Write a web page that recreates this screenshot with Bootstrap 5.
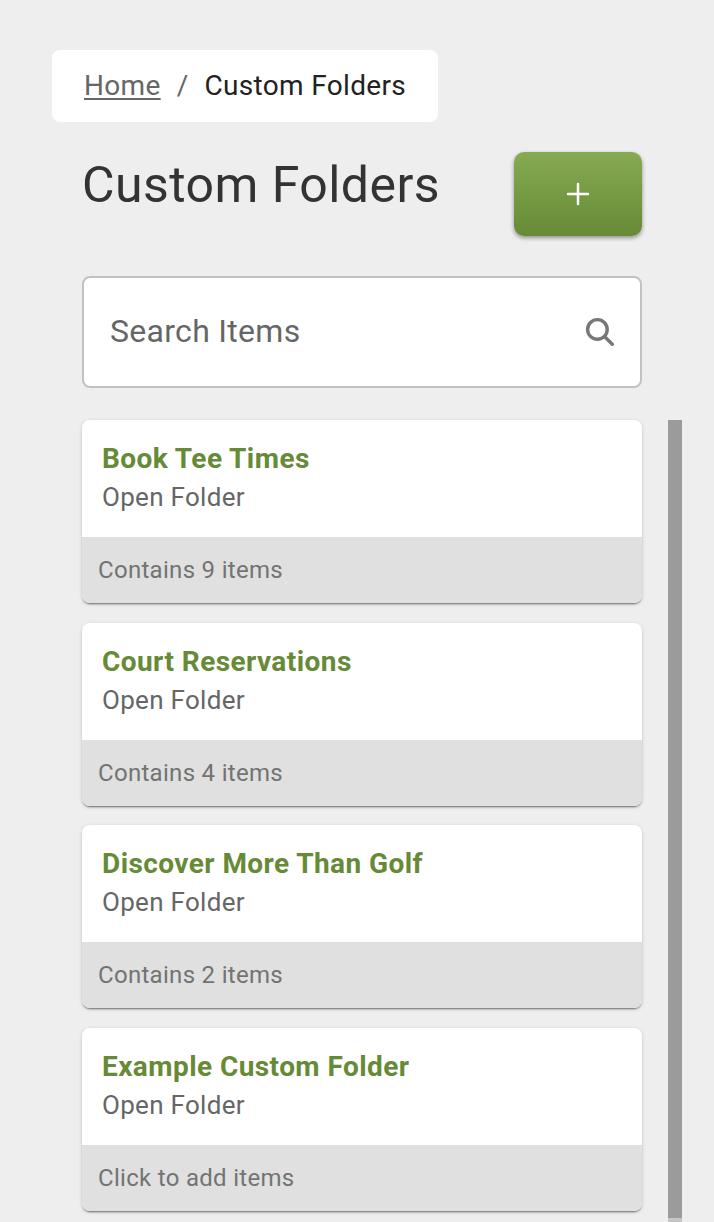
<!DOCTYPE html>
<html lang="en">
<head>
<meta charset="utf-8">
<meta name="viewport" content="width=device-width, initial-scale=1">
<title>Custom Folders</title>
<link href="https://cdn.jsdelivr.net/npm/bootstrap@5.3.0/dist/css/bootstrap.min.css" rel="stylesheet">
<style>
body{background:#eee;font-family:Roboto,sans-serif;color:#333;height:1222px;overflow:hidden;letter-spacing:.3px}
.page{padding:50px 32px 0 52px}
.crumbs{--bs-breadcrumb-divider-color:#666;--bs-breadcrumb-item-padding-x:16px;width:386px;height:72px;padding:0 32px;border-radius:8px;font-size:28px;line-height:72px;letter-spacing:.32px;white-space:nowrap}
.crumbs a{color:#666;text-underline-offset:3px;text-decoration-thickness:2px}
.crumbs .active{color:#222}
.inner{padding-left:30px}
.head{width:560px;height:84px;margin-top:30px}
.head h1{font-size:50px;font-weight:400;line-height:66px;letter-spacing:.45px;white-space:nowrap}
.add-btn{width:128px;height:84px;border:0;border-radius:10px;background:linear-gradient(#87ab53,#668a36);box-shadow:0 2px 4px rgba(0,0,0,.4)}
.search{width:560px;height:112px;margin-top:40px;border:2px solid #c2c2c2;border-radius:8px;padding:0 25px 0 26px;font-size:32px;color:#666}
.search span{line-height:48px;padding-bottom:2px}
.list-area{margin-top:32px;height:802px}
.folders{width:560px}
.folder{--bs-card-border-width:0;--bs-card-border-radius:8px;--bs-card-inner-border-radius:8px;height:183px;margin-bottom:19.67px;box-shadow:0 2px 2px -1px rgba(0,0,0,.5),0 1px 4px rgba(0,0,0,.13)}
.folder .card-body{padding:19px 20px 0;height:117px}
.folder h2{font-size:28px;line-height:39px;font-weight:700;color:#668a36;margin:0;letter-spacing:.43px}
.folder p{font-size:26px;line-height:39px;color:#666;margin:0}
.folder .card-footer{background:#e0e0e0;color:#737373;font-size:24px;line-height:66px;padding:0 16px;height:66px}
.track{width:14px;background:#c6c6c6}
.thumb{height:798px;background:#9b9b9b}
</style>
<script src="https://cdn.jsdelivr.net/npm/bootstrap@5.3.0/dist/js/bootstrap.bundle.min.js"></script>
</head>
<body>
<main class="page">
  <nav aria-label="breadcrumb">
    <ol class="breadcrumb crumbs bg-white mb-0 flex-nowrap">
      <li class="breadcrumb-item"><a href="#">Home</a></li>
      <li class="breadcrumb-item active" aria-current="page">Custom Folders</li>
    </ol>
  </nav>
  <div class="inner">
    <header class="head d-flex justify-content-between align-items-start">
      <h1 class="mb-0">Custom Folders</h1>
      <button class="btn add-btn d-flex align-items-center justify-content-center p-0" aria-label="Add">
        <svg width="24" height="24" viewBox="0 0 24 24" fill="none" stroke="#fff" stroke-width="2.5" stroke-linecap="round"><path d="M12 2v20M2 12h20"/></svg>
      </button>
    </header>
    <div class="search bg-white d-flex align-items-center justify-content-between">
      <span>Search Items</span>
      <svg width="30" height="30" viewBox="0 0 30 30" fill="none" stroke="#777" stroke-width="3.4" stroke-linecap="round"><circle cx="12.4" cy="12.4" r="9.8"/><path d="M20 20l7.3 7.3"/></svg>
    </div>
    <div class="list-area d-flex justify-content-between">
      <div class="folders">
        <article class="card folder"><div class="card-body"><h2>Book Tee Times</h2><p>Open Folder</p></div><div class="card-footer">Contains 9 items</div></article>
        <article class="card folder"><div class="card-body"><h2>Court Reservations</h2><p>Open Folder</p></div><div class="card-footer">Contains 4 items</div></article>
        <article class="card folder"><div class="card-body"><h2>Discover More Than Golf</h2><p>Open Folder</p></div><div class="card-footer">Contains 2 items</div></article>
        <article class="card folder"><div class="card-body"><h2>Example Custom Folder</h2><p>Open Folder</p></div><div class="card-footer">Click to add items</div></article>
      </div>
      <div class="track"><div class="thumb"></div></div>
    </div>
  </div>
</main>
</body>
</html>
